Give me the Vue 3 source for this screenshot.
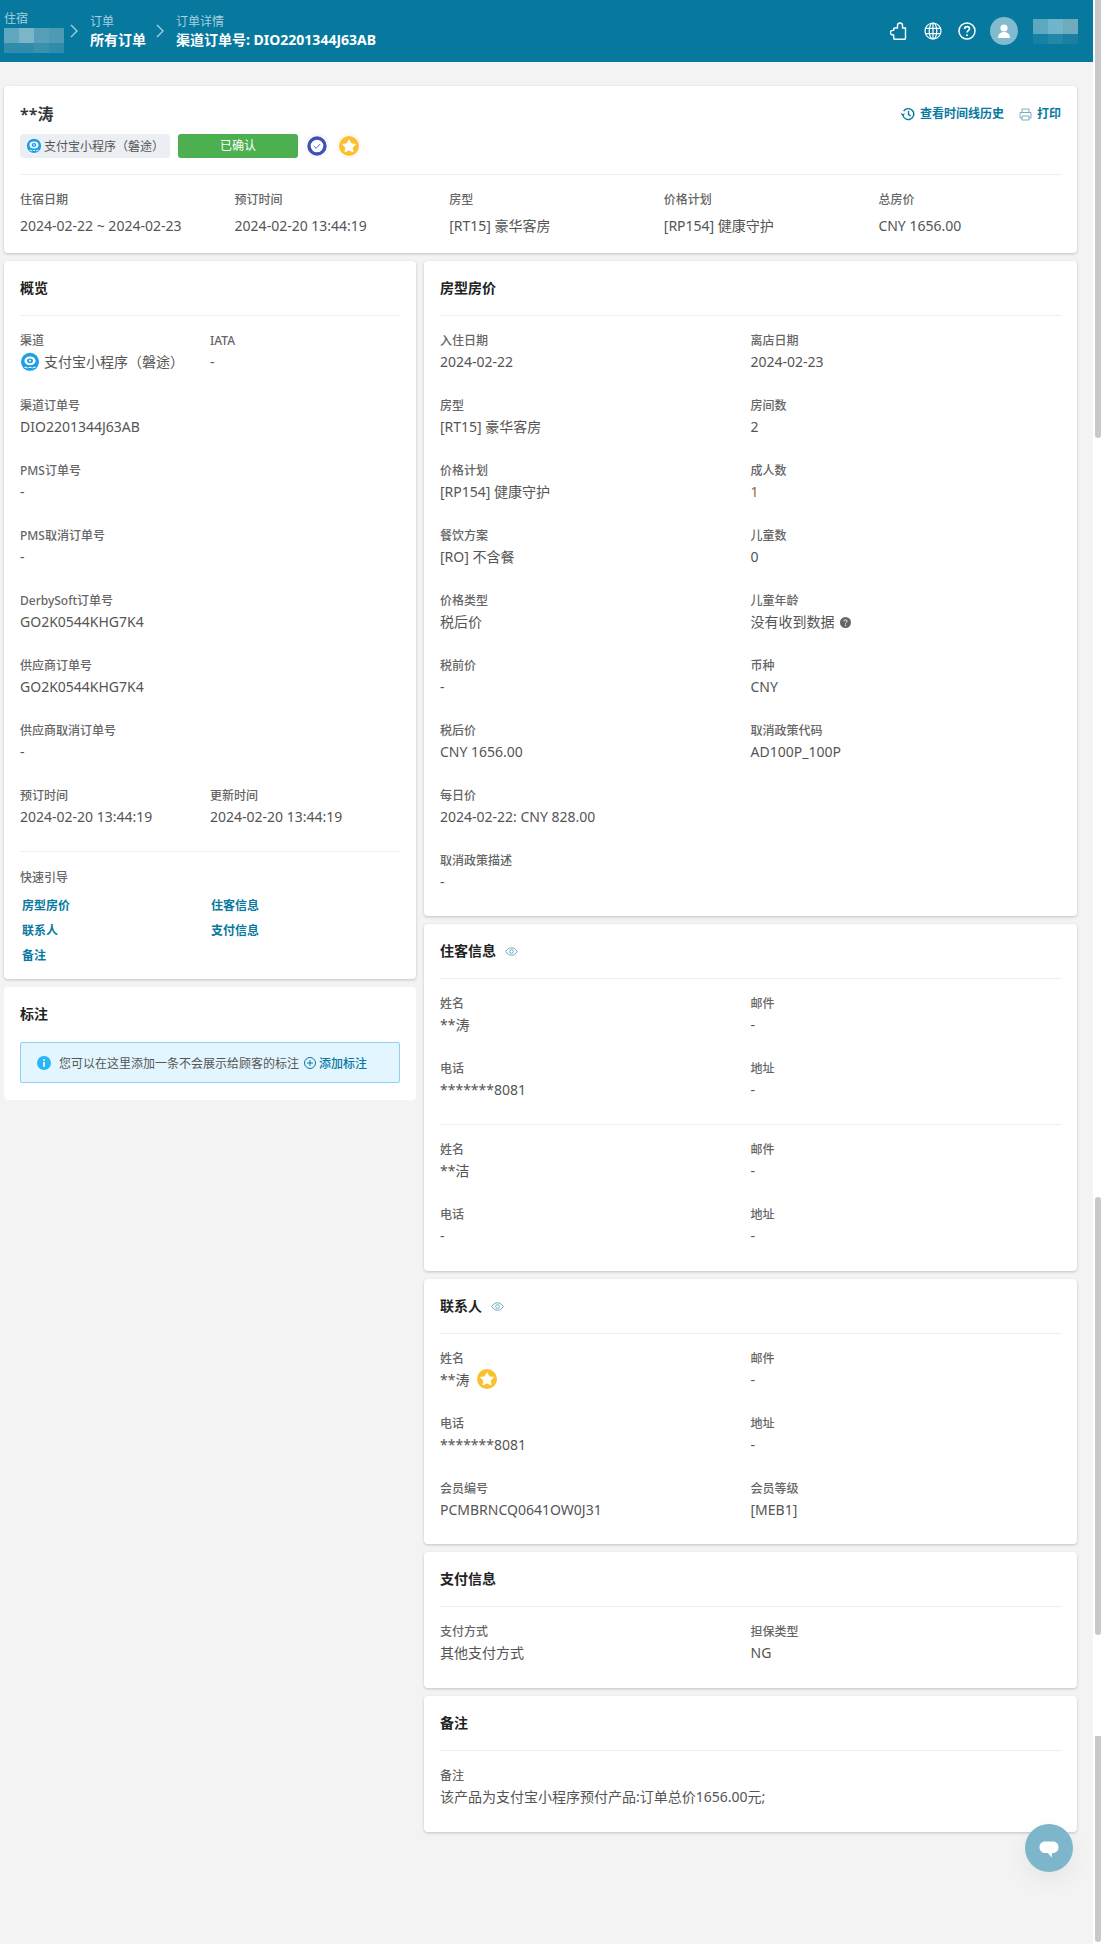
<script setup>
const topFields = [
  { label: '住宿日期', value: '2024-02-22 ~ 2024-02-23' },
  { label: '预订时间', value: '2024-02-20 13:44:19' },
  { label: '房型', value: '[RT15] 豪华客房' },
  { label: '价格计划', value: '[RP154] 健康守护' },
  { label: '总房价', value: 'CNY 1656.00' }
]
const overviewSingles = [
  { label: '渠道订单号', value: 'DIO2201344J63AB' },
  { label: 'PMS订单号', value: '-' },
  { label: 'PMS取消订单号', value: '-' },
  { label: 'DerbySoft订单号', value: 'GO2K0544KHG7K4' },
  { label: '供应商订单号', value: 'GO2K0544KHG7K4' },
  { label: '供应商取消订单号', value: '-' }
]
const links = ['房型房价', '住客信息', '联系人', '支付信息', '备注']
const rate = [
  { label: '入住日期', value: '2024-02-22' },
  { label: '离店日期', value: '2024-02-23' },
  { label: '房型', value: '[RT15] 豪华客房' },
  { label: '房间数', value: '2' },
  { label: '价格计划', value: '[RP154] 健康守护' },
  { label: '成人数', value: '1', warm: true },
  { label: '餐饮方案', value: '[RO] 不含餐' },
  { label: '儿童数', value: '0' },
  { label: '价格类型', value: '税后价' },
  { label: '儿童年龄', value: '没有收到数据', help: true },
  { label: '税前价', value: '-' },
  { label: '币种', value: 'CNY' },
  { label: '税后价', value: 'CNY 1656.00' },
  { label: '取消政策代码', value: 'AD100P_100P' },
  { label: '每日价', value: '2024-02-22: CNY 828.00' },
  { label: '', value: '' },
  { label: '取消政策描述', value: '-' }
]
const guestA = [
  { label: '姓名', value: '**涛' },
  { label: '邮件', value: '-' },
  { label: '电话', value: '*******8081' },
  { label: '地址', value: '-' }
]
const guestB = [
  { label: '姓名', value: '**洁' },
  { label: '邮件', value: '-' },
  { label: '电话', value: '-' },
  { label: '地址', value: '-' }
]
const contact = [
  { label: '姓名', value: '**涛', star: true },
  { label: '邮件', value: '-' },
  { label: '电话', value: '*******8081' },
  { label: '地址', value: '-' },
  { label: '会员编号', value: 'PCMBRNCQ0641OW0J31' },
  { label: '会员等级', value: '[MEB1]' }
]
const payment = [
  { label: '支付方式', value: '其他支付方式' },
  { label: '担保类型', value: 'NG' }
]
const blurLeft = ['#5fa6bf', '#7db5c8', '#559fb9', '#4e9ab5', '#2f8cab', '#2f8cab', '#3a91ae', '#2f8cab']
const blurRight = ['#5da7c0', '#6fb6cc', '#6faabd', '#1681a5', '#2487a8', '#1a7fa2']
</script>

<template>
  <div class="page">
    <header class="topbar">
      <div class="crumbs">
        <div class="crumb">
          <div class="crumb-small">住宿</div>
          <div class="blur blur-left">
            <i v-for="(c, i) in blurLeft" :key="i" :style="{ background: c }"></i>
          </div>
        </div>
        <svg class="chev chev-first" width="8" height="14" viewBox="0 0 8 14"><path d="M1 1l6 6-6 6" fill="none" stroke="#a5cedc" stroke-width="1.4"/></svg>
        <div class="crumb">
          <div class="crumb-small">订单</div>
          <div class="crumb-main">所有订单</div>
        </div>
        <svg class="chev" width="8" height="14" viewBox="0 0 8 14"><path d="M1 1l6 6-6 6" fill="none" stroke="#a5cedc" stroke-width="1.4"/></svg>
        <div class="crumb">
          <div class="crumb-small">订单详情</div>
          <div class="crumb-main">渠道订单号: DIO2201344J63AB</div>
        </div>
      </div>
      <div class="tools">
        <svg width="18" height="20" viewBox="0 0 18 20" fill="none" stroke="#fff" stroke-width="1.4" stroke-linejoin="round"><path d="M5 7h2.500V4.500a2.500 2.500 0 0 1 5 0V7H15.500v10.500a.8.8 0 0 1-.8.8H4.500a.8.8 0 0 1-.8-.8V14h-1a2.300 2.300 0 0 1 0-4.600h1V7.800A.8.8 0 0 1 4.500 7z"/></svg>
        <svg width="18" height="18" viewBox="0 0 18 18" fill="none" stroke="#fff" stroke-width="1.200"><circle cx="9" cy="9" r="8"/><ellipse cx="9" cy="9" rx="3.800" ry="8"/><path d="M9 1v16M1.300 6.300h15.400M1.300 11.700h15.400"/></svg>
        <svg width="18" height="18" viewBox="0 0 18 18" fill="none"><circle cx="9" cy="9" r="8" stroke="#fff" stroke-width="1.500"/><path d="M6.600 7c0-1.500 1.100-2.400 2.500-2.400s2.400.9 2.400 2.100c0 1.900-2.500 1.900-2.500 3.900" stroke="#fff" stroke-width="1.600"/><circle cx="9" cy="13.200" r="1" fill="#fff"/></svg>
        <div class="avatar">
          <svg width="14" height="14" viewBox="0 0 14 14" fill="#fff"><circle cx="7" cy="4" r="3.600"/><path d="M1 14c0-3.800 2.200-6 6-6s6 2.200 6 6z"/></svg>
        </div>
        <div class="blur blur-right">
          <i v-for="(c, i) in blurRight" :key="i" :style="{ background: c }"></i>
        </div>
      </div>
    </header>

    <main class="content">
      <section class="card summary">
        <div class="summary-head">
          <div class="guest-name">**涛</div>
          <div class="actions">
            <span class="action">
              <svg width="14" height="14" viewBox="0 0 14 14" fill="none" stroke="#07799f" stroke-width="1.400"><path d="M2.600 4.200A5.500 5.500 0 1 1 1.800 7.500"/><path d="M.3 6.400l1.500 1.700 1.700-1.500" stroke-width="1.200"/><path d="M7.500 4v3.500l2.300 1.400"/></svg>
              查看时间线历史
            </span>
            <span class="action">
              <svg width="13" height="13" viewBox="0 0 13 13" fill="none" stroke="#7aaec2" stroke-width="1"><path d="M3 4V1h7v3M3 10H1V4.500h11V10h-2M3 8h7v4H3z"/></svg>
              打印
            </span>
          </div>
        </div>
        <div class="chips">
          <span class="channel-chip">
            <svg class="logo-sm" viewBox="0 0 20 20"><circle cx="10" cy="10" r="10" fill="#f4f7fa"/><circle cx="10" cy="9.800" r="9" fill="#1c9fe6"/><ellipse cx="10" cy="8.800" rx="5.600" ry="4.400" fill="#fff"/><ellipse cx="10" cy="8.800" rx="3" ry="2.400" fill="#1c9fe6"/><circle cx="10" cy="8.800" r="1" fill="#fff"/><path d="M4.500 15l3 1M15.500 15l-3 1M8.500 15.500h3" stroke="#fff" stroke-width="1.100" fill="none"/></svg>
            支付宝小程序（磐途）
          </span>
          <span class="status">已确认</span>
          <span class="round-badge">
            <svg width="20" height="20" viewBox="0 0 20 20"><circle cx="10" cy="10" r="8" fill="#fff" stroke="#3f51b5" stroke-width="3.400"/><path d="M7 10.200l2.200 2.100 4-4.300" fill="none" stroke="#5c6bc0" stroke-width="1"/></svg>
          </span>
          <span class="round-badge">
            <svg width="20" height="20" viewBox="0 0 20 20"><circle cx="10" cy="10" r="10" fill="#fbc02d"/><path d="M10 3.800l2 4 4.400.6-3.200 3.100.8 4.400-4-2.100-4 2.100.8-4.400-3.200-3.100 4.400-.6z" fill="#fff" stroke="#fff" stroke-width="1" stroke-linejoin="round"/></svg>
          </span>
        </div>
        <div class="summary-grid">
          <div v-for="f in topFields" :key="f.label">
            <div class="label">{{ f.label }}</div>
            <div class="summary-value">{{ f.value }}</div>
          </div>
        </div>
      </section>

      <div class="columns">
        <div class="col">
          <section class="card overview">
            <h3 class="title">概览</h3>
            <div class="rows rows-overview">
              <div class="field">
                <div class="label">渠道</div>
                <div class="value with-logo">
                  <svg class="logo-md" viewBox="0 0 20 20"><circle cx="10" cy="10" r="10" fill="#f4f7fa"/><circle cx="10" cy="9.800" r="9" fill="#1c9fe6"/><ellipse cx="10" cy="8.800" rx="5.600" ry="4.400" fill="#fff"/><ellipse cx="10" cy="8.800" rx="3" ry="2.400" fill="#1c9fe6"/><circle cx="10" cy="8.800" r="1" fill="#fff"/><path d="M4.500 15l3 1M15.500 15l-3 1M8.500 15.500h3" stroke="#fff" stroke-width="1.100" fill="none"/></svg>
                  支付宝小程序（磐途）
                </div>
              </div>
              <div class="field">
                <div class="label">IATA</div>
                <div class="value">-</div>
              </div>
              <div v-for="f in overviewSingles" :key="f.label" class="field span">
                <div class="label">{{ f.label }}</div>
                <div class="value">{{ f.value }}</div>
              </div>
              <div class="field">
                <div class="label">预订时间</div>
                <div class="value">2024-02-20 13:44:19</div>
              </div>
              <div class="field">
                <div class="label">更新时间</div>
                <div class="value">2024-02-20 13:44:19</div>
              </div>
            </div>
            <div class="quick">
              <div class="label">快速引导</div>
              <div class="quick-links">
                <a v-for="l in links" :key="l">{{ l }}</a>
              </div>
            </div>
          </section>

          <section class="card notes">
            <h3 class="title no-rule">标注</h3>
            <div class="alert">
              <svg width="14" height="14" viewBox="0 0 14 14"><circle cx="7" cy="7" r="7" fill="#29b6f6"/><rect x="6.200" y="6" width="1.600" height="4.800" fill="#fff"/><rect x="6.200" y="3.200" width="1.600" height="1.700" fill="#fff"/></svg>
              <span class="alert-text">您可以在这里添加一条不会展示给顾客的标注</span>
              <svg class="alert-plus" width="12" height="12" viewBox="0 0 12 12" fill="none" stroke="#07799f" stroke-width="1"><circle cx="6" cy="6" r="5.500"/><path d="M6 3v6M3 6h6"/></svg>
              <span class="alert-link">添加标注</span>
            </div>
          </section>
        </div>

        <div class="col">
          <section class="card pad-0">
            <h3 class="title">房型房价</h3>
            <div class="rows">
              <div v-for="(f, i) in rate" :key="i" class="field">
                <template v-if="f.label">
                  <div class="label">{{ f.label }}</div>
                  <div class="value" :class="{ warm: f.warm }">
                    {{ f.value }}
                    <svg v-if="f.help" class="help" width="11" height="11" viewBox="0 0 11 11"><circle cx="5.500" cy="5.500" r="5.500" fill="#666"/><path d="M3.900 4.300c0-1 .7-1.500 1.600-1.500s1.600.5 1.600 1.300c0 1.200-1.600 1.200-1.600 2.400" fill="none" stroke="#fff" stroke-width="1"/><circle cx="5.500" cy="8.300" r=".7" fill="#fff"/></svg>
                  </div>
                </template>
              </div>
            </div>
          </section>

          <section class="card">
            <h3 class="title">
              住客信息
              <svg class="eye" width="13" height="9" viewBox="0 0 13 9" fill="none" stroke="#6aa8c0" stroke-width="1"><path d="M.7 4.500C2.300 2 4.200.8 6.500.8s4.200 1.200 5.800 3.700C10.700 7 8.800 8.200 6.500 8.200S2.300 7 .7 4.500z"/><circle cx="6.500" cy="4.500" r="1.800"/></svg>
            </h3>
            <div class="rows">
              <div v-for="f in guestA" :key="f.label" class="field">
                <div class="label">{{ f.label }}</div>
                <div class="value">{{ f.value }}</div>
              </div>
            </div>
            <hr class="rule" />
            <div class="rows">
              <div v-for="f in guestB" :key="f.label" class="field">
                <div class="label">{{ f.label }}</div>
                <div class="value">{{ f.value }}</div>
              </div>
            </div>
          </section>

          <section class="card pad-0">
            <h3 class="title">
              联系人
              <svg class="eye" width="13" height="9" viewBox="0 0 13 9" fill="none" stroke="#6aa8c0" stroke-width="1"><path d="M.7 4.500C2.300 2 4.200.8 6.500.8s4.200 1.200 5.800 3.700C10.700 7 8.800 8.200 6.500 8.200S2.300 7 .7 4.500z"/><circle cx="6.500" cy="4.500" r="1.800"/></svg>
            </h3>
            <div class="rows">
              <div v-for="f in contact" :key="f.label" class="field">
                <div class="label">{{ f.label }}</div>
                <div class="value">
                  {{ f.value }}
                  <svg v-if="f.star" class="value-star" width="20" height="20" viewBox="0 0 20 20"><circle cx="10" cy="10" r="10" fill="#fbc02d"/><path d="M10 3.800l2 4 4.400.6-3.200 3.100.8 4.400-4-2.100-4 2.100.8-4.400-3.200-3.100 4.400-.6z" fill="#fff" stroke="#fff" stroke-width="1" stroke-linejoin="round"/></svg>
                </div>
              </div>
            </div>
          </section>

          <section class="card">
            <h3 class="title">支付信息</h3>
            <div class="rows">
              <div v-for="f in payment" :key="f.label" class="field">
                <div class="label">{{ f.label }}</div>
                <div class="value">{{ f.value }}</div>
              </div>
            </div>
          </section>

          <section class="card">
            <h3 class="title">备注</h3>
            <div class="field">
              <div class="label">备注</div>
              <div class="value">该产品为支付宝小程序预付产品:订单总价1656.00元;</div>
            </div>
          </section>
        </div>
      </div>
    </main>

    <button class="chat" aria-label="chat">
      <svg width="20" height="17" viewBox="0 0 20 17"><path d="M6 .5h8c3.300 0 5.500 2.500 5.500 5.700 0 3.200-2.200 5.800-5.500 5.800h-1l-.2 4.500-4-4.500H6C2.700 12 .5 9.400 .5 6.200S2.700 .5 6 .5z" fill="#fff"/></svg>
    </button>

    <div class="thumb thumb-a"></div>
    <div class="thumb thumb-b"></div>
    <div class="thumb thumb-c"></div>
  </div>
</template>

<style>
html, body { margin: 0; background: #fff; overflow: hidden; }
</style>

<style scoped>
.page {
  position: relative;
  width: 1093px;
  height: 1944px;
  background: #f3f3f3;
  font-family: "Noto Sans", "Noto Sans CJK SC", sans-serif;
  color: #555;
  font-size: 14px;
}
.topbar {
  height: 62px;
  background: #07799f;
  display: flex;
  justify-content: space-between;
  align-items: center;
  padding: 0 15px 0 4px;
}
.crumbs { display: flex; align-items: center; }
.crumb { display: flex; flex-direction: column; }
.crumb-small { font-size: 12px; line-height: 16px; color: #a9d0de; margin-top: 2px; }
.crumb-main { font-size: 14px; line-height: 22px; font-weight: 700; color: #fff; margin-top: -1px; }
.chev { margin: 0 12px 0 10px; flex: none; }
.chev-first { margin-left: 6px; }
.blur { display: grid; }
.blur i { display: block; }
.blur-left { grid-template-columns: repeat(4, 15px); grid-template-rows: 15px 10px; margin-top: 1px; }
.blur-right { grid-template-columns: repeat(3, 15px); grid-template-rows: 15px 10px; margin-left: -1px; }
.tools { display: flex; align-items: center; gap: 16px; }
.avatar {
  width: 28px;
  height: 28px;
  margin-left: -2px;
  border-radius: 50%;
  background: #82bace;
  display: flex;
  align-items: center;
  justify-content: center;
}

.content { padding: 24px 16px 0 4px; }
.card {
  background: #fff;
  border-radius: 4px;
  box-shadow: 0 1px 3px rgba(0, 0, 0, .2);
  padding: 16px 16px 1px;
}
.pad-0 { padding-bottom: 0; }

.summary { height: 167px; box-sizing: border-box; padding-bottom: 16px; }
.summary-head { display: flex; justify-content: space-between; align-items: center; height: 24px; }
.guest-name { font-size: 16px; line-height: 24px; font-weight: 600; color: #333; }
.actions { display: flex; gap: 15px; font-size: 12px; font-weight: 700; color: #07799f; }
.action { display: inline-flex; align-items: center; gap: 5px; line-height: 18px; }
.chips { display: flex; align-items: center; margin-top: 8px; padding-bottom: 16px; border-bottom: 1px solid #eee; }
.channel-chip {
  display: inline-flex;
  align-items: center;
  gap: 2px;
  width: 150px;
  box-sizing: border-box;
  height: 24px;
  padding-left: 6px;
  background: #ebeff3;
  border-radius: 4px;
  font-size: 12px;
  color: #555;
  white-space: nowrap;
}
.logo-sm { width: 16px; height: 16px; flex: none; }
.status {
  width: 120px;
  height: 24px;
  margin-left: 8px;
  background: #4caf50;
  border-radius: 3px;
  color: #fff;
  font-size: 12px;
  line-height: 24px;
  text-align: center;
}
.round-badge {
  width: 22px;
  height: 22px;
  margin-left: 8px;
  display: flex;
  align-items: center;
  justify-content: center;
  border-radius: 50%;
  background: #fff;
  box-shadow: 0 0 2px rgba(0, 0, 0, .15);
}
.round-badge + .round-badge { margin-left: 10px; }
.summary-grid {
  display: grid;
  grid-template-columns: repeat(4, 214.6px) 1fr;
  padding-top: 15px;
}
.summary-value { font-size: 14px; line-height: 22px; margin-top: 5px; color: #555; }

.columns { display: flex; gap: 8px; margin-top: 8px; align-items: flex-start; }
.col { display: flex; flex-direction: column; gap: 8px; }
.col:first-child { width: 412px; flex: none; }
.col:last-child { flex: 1; min-width: 0; }

.title {
  margin: 0;
  font-size: 14px;
  line-height: 22px;
  font-weight: 600;
  color: #222;
  padding-bottom: 16px;
  border-bottom: 1px solid #eee;
  display: flex;
  align-items: center;
}
.title.no-rule { border-bottom: 0; padding-bottom: 17px; }
.eye { margin-left: 9px; }

.rows { display: grid; grid-template-columns: 1fr 1fr; }
.title + .rows, .title + .field, .rule + .rows { padding-top: 15px; }
.rule { margin: 0; border: 0; border-top: 1px solid #eee; }
.span { grid-column: 1 / -1; }
.field { min-height: 65px; box-sizing: border-box; }
.title + .field { min-height: 80px; }
.label { font-size: 12px; line-height: 20px; font-weight: 500; color: #666; }
.value { font-size: 14px; line-height: 22px; color: #555; display: flex; align-items: center; white-space: nowrap; }
.warm { color: #8a6a3c; }
.with-logo { gap: 4px; }
.logo-md { width: 20px; height: 20px; flex: none; }
.help { margin-left: 5px; }
.value-star { margin-left: 8px; margin-top: -2px; }

.overview { padding-bottom: 11px; }
.quick { border-top: 1px solid #eee; padding-top: 16px; }
.quick-links {
  display: grid;
  grid-template-columns: 1fr 1fr;
  grid-auto-rows: 25px;
  margin-top: 5px;
  padding-left: 2px;
}
.quick-links a {
  font-size: 12px;
  line-height: 25px;
  font-weight: 700;
  color: #07799f;
}

.notes { box-shadow: none; padding-bottom: 17px; }
.alert {
  height: 41px;
  box-sizing: border-box;
  display: flex;
  align-items: center;
  padding-left: 16px;
  background: #e3f5fe;
  border: 1px solid #90cff5;
  border-radius: 2px;
  font-size: 12px;
}
.alert-text { margin-left: 8px; color: #555; }
.alert-plus { margin-left: 5px; }
.alert-link { margin-left: 3px; color: #07799f; font-weight: 500; }

.chat {
  position: absolute;
  left: 1025px;
  top: 1824px;
  width: 48px;
  height: 48px;
  padding: 0;
  border: 0;
  border-radius: 50%;
  background: #7db6ca;
  box-shadow: 0 8px 24px rgba(0, 0, 0, .06);
  display: flex;
  align-items: center;
  justify-content: center;
}
.chat svg { margin-top: 3px; }
.thumb { position: absolute; left: 1095px; width: 6px; background: #c8c8c8; border-radius: 0 0 3px 3px; }
.thumb-a { top: 0; height: 438px; }
.thumb-b { top: 1197px; height: 438px; border-radius: 3px; }
.thumb-c { top: 1736px; height: 206px; }
</style>
